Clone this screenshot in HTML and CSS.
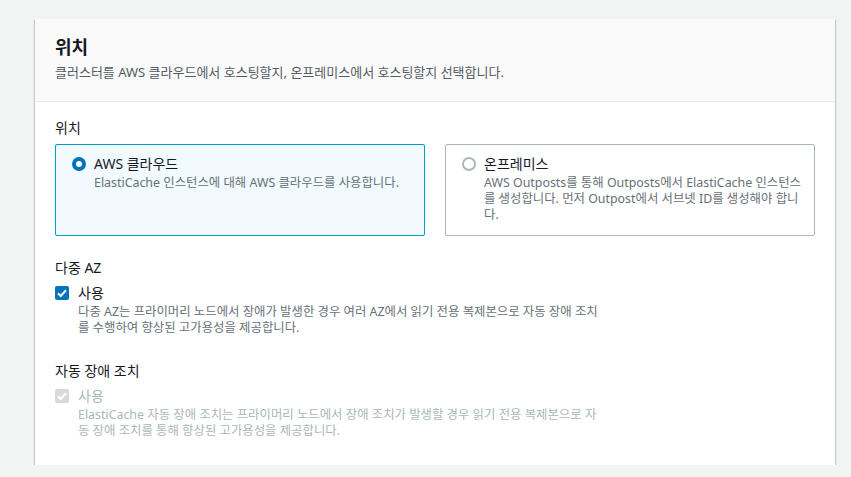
FILE: index.html
```html
<!DOCTYPE html>
<html lang="ko">
<head>
  <meta charset="UTF-8">
  <meta name="viewport" content="width=device-width, initial-scale=1.0">
  <title>위치</title>
  <link rel="stylesheet" href="styles.css">
</head>
<body>
  <div class="container">
    <!-- Header -->
    <div class="container-header">
      <h2 class="container-title">위치</h2>
      <p class="container-desc">클러스터를 AWS 클라우드에서 호스팅할지, 온프레미스에서 호스팅할지 선택합니다.</p>
    </div>

    <div class="container-body">
      <!-- Location tiles -->
      <div class="field field-tiles">
        <div class="field-label">위치</div>
        <div class="tiles">
          <label class="tile tile-selected">
            <span class="radio radio-checked"></span>
            <span class="tile-text">
              <span class="tile-label">AWS 클라우드</span>
              <span class="tile-desc">ElastiCache 인스턴스에 대해 AWS 클라우드를 사용합니다.</span>
            </span>
          </label>
          <label class="tile">
            <span class="radio"></span>
            <span class="tile-text">
              <span class="tile-label">온프레미스</span>
              <span class="tile-desc">AWS Outposts를 통해 Outposts에서 ElastiCache 인스턴스를 생성합니다. 먼저 Outpost에서 서브넷 ID를 생성해야 합니다.</span>
            </span>
          </label>
        </div>
      </div>

      <!-- Multi AZ -->
      <div class="field field-check">
        <div class="field-label">다중 AZ</div>
        <label class="check">
          <span class="checkbox checkbox-checked">
            <svg width="14" height="14" viewBox="0 0 14 14"><path d="M3 7.3l2.7 2.7L11 4.3" fill="none" stroke="#fff" stroke-width="2"/></svg>
          </span>
          <span class="check-text">
            <span class="check-label">사용</span>
            <span class="check-desc">다중 AZ는 프라이머리 노드에서 장애가 발생한 경우 여러 AZ에서 읽기 전용 복제본으로 자동 장애 조치를 수행하여 향상된 고가용성을 제공합니다.</span>
          </span>
        </label>
      </div>

      <!-- Auto failover -->
      <div class="field field-check">
        <div class="field-label">자동 장애 조치</div>
        <label class="check check-disabled">
          <span class="checkbox checkbox-disabled">
            <svg width="14" height="14" viewBox="0 0 14 14"><path d="M3 7.3l2.7 2.7L11 4.3" fill="none" stroke="#fff" stroke-width="2"/></svg>
          </span>
          <span class="check-text">
            <span class="check-label">사용</span>
            <span class="check-desc">ElastiCache 자동 장애 조치는 프라이머리 노드에서 장애 조치가 발생할 경우 읽기 전용 복제본으로 자동 장애 조치를 통해 향상된 고가용성을 제공합니다.</span>
          </span>
        </label>
      </div>
    </div>
  </div>
</body>
</html>
```

FILE: styles.css
```css
body {
  font-family: 'Noto Sans', 'Noto Sans CJK KR', sans-serif;
  margin: 0;
  padding: 19px 16px 0 35px;
  background-color: #f2f3f3;
  color: #16191f;
}

.container {
  background-color: #ffffff;
  box-shadow: 0 1px 1px 0 rgba(0, 28, 36, 0.3), 1px 1px 1px 0 rgba(0, 28, 36, 0.15), -1px 1px 1px 0 rgba(0, 28, 36, 0.15);
}

.container-header {
  background-color: #fafafa;
  border-bottom: 1px solid #eaeded;
  padding: 17px 20px 20px;
}

.container-title {
  margin: 0;
  font-size: 18px;
  line-height: 22px;
  font-weight: bold;
}

.container-desc {
  margin: 5px 0 0;
  font-size: 13px;
  line-height: 18px;
  color: #545b64;
}

.container-body {
  padding: 16px 20px 26px;
}

.field-label {
  font-size: 14px;
  line-height: 20px;
}

.field-tiles {
  margin-bottom: 22px;
}

.field-check + .field-check {
  margin-top: 25px;
}

/* Tiles */
.tiles {
  display: grid;
  grid-template-columns: 1fr 1fr;
  gap: 20px;
  margin-top: 6px;
}

.tile {
  display: flex;
  gap: 8px;
  padding: 8px 12px 12px 16px;
  border: 1px solid #aab7b8;
  border-radius: 2px;
  background-color: #ffffff;
}

.tile-selected {
  border-color: #00a1c9;
  background-color: #f1faff;
}

.radio {
  flex: none;
  box-sizing: border-box;
  width: 14px;
  height: 14px;
  margin-top: 4px;
  border: 2px solid #aab7b8;
  border-radius: 50%;
  background-color: #ffffff;
}

.radio-checked {
  border: 4px solid #0073bb;
}

.tile-text, .check-text {
  display: flex;
  flex-direction: column;
}

.tile-label, .check-label {
  font-size: 14px;
  line-height: 22px;
}

.tile-desc, .check-desc {
  font-size: 12.4px;
  line-height: 16px;
  color: #687078;
}

/* Checkboxes */
.check {
  display: flex;
  gap: 9px;
  margin-top: 4px;
}

.check-text {
  max-width: 523px;
}

.checkbox {
  flex: none;
  display: flex;
  width: 14px;
  height: 14px;
  margin-top: 4px;
  border-radius: 2px;
}

.checkbox-checked {
  background-color: #0073bb;
}

.checkbox-disabled {
  background-color: #d5dbdb;
}

.check-disabled .check-label,
.check-disabled .check-desc {
  color: #aab7b8;
}
```
